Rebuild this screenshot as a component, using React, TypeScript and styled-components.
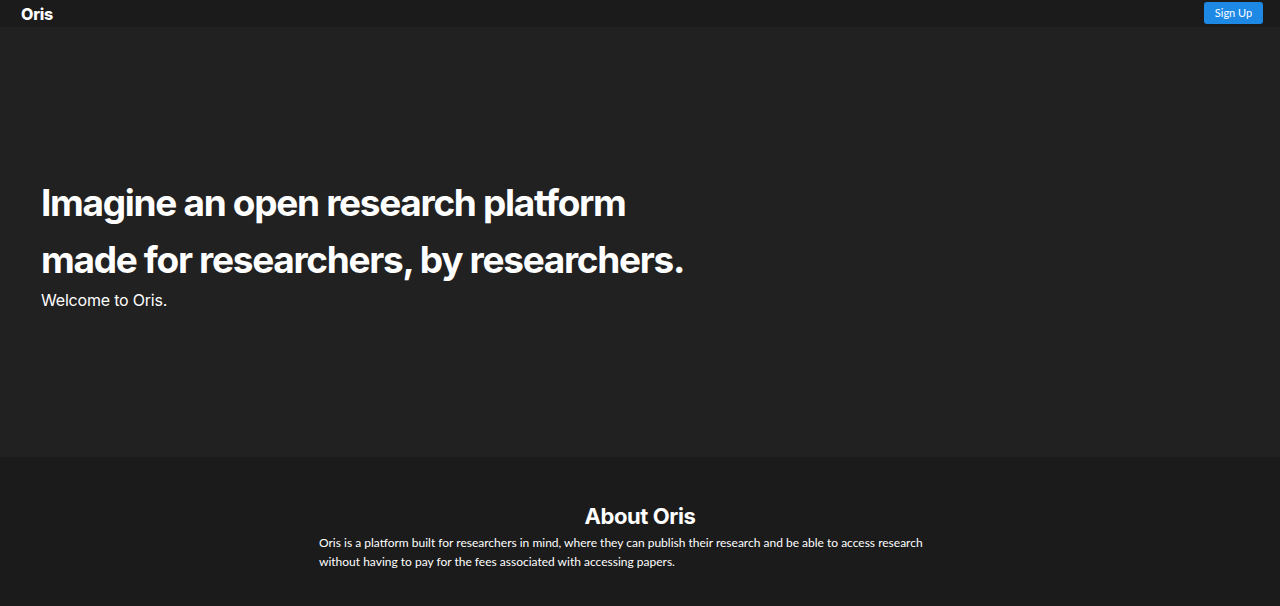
import React from 'react';
import styled, { createGlobalStyle } from 'styled-components';

const GlobalStyle = createGlobalStyle`
  html, body {
    margin: 0;
    padding: 0;
    background: #1b1b1b;
  }
  * {
    box-sizing: border-box;
  }
`;

const headingFont = `Inter, "Noto Sans", sans-serif`;
const bodyFont = `Lato, "Open Sans", sans-serif`;

export default function App() {
  return (
    <>
      <GlobalStyle />
      <Page>
        <NavBar>
          <Logo>Oris</Logo>
          <SignUpButton>Sign Up</SignUpButton>
        </NavBar>
        <Hero>
          <HeroTitle>
            Imagine an open research platform
            <br />
            made for researchers, by researchers.
          </HeroTitle>
          <HeroSubtitle>Welcome to Oris.</HeroSubtitle>
        </Hero>
        <About>
          <AboutInner>
            <AboutTitle>About Oris</AboutTitle>
            <AboutText>
              Oris is a platform built for researchers in mind, where they can
              publish their research and be able to access research without
              having to pay for the fees associated with accessing papers.
            </AboutText>
          </AboutInner>
        </About>
      </Page>
    </>
  );
}

const Page = styled.div`
  width: 100%;
  min-height: 606px;
  background: #1b1b1b;
  color: #ffffff;
`;

const NavBar = styled.nav`
  height: 27px;
  padding: 0 17px 0 21px;
  display: flex;
  align-items: center;
  justify-content: space-between;
  background: #1b1b1b;
`;

const Logo = styled.span`
  font-family: ${headingFont};
  font-weight: 800;
  font-size: 16px;
  letter-spacing: -0.2px;
  color: #ffffff;
`;

const SignUpButton = styled.button`
  height: 22px;
  width: 59px;
  margin-top: -2px;
  border: none;
  border-radius: 3px;
  background: #1e88e5;
  color: #ffffff;
  font-family: ${bodyFont};
  font-size: 11px;
  cursor: pointer;
`;

const Hero = styled.section`
  height: 430px;
  padding: 0 41px;
  display: flex;
  flex-direction: column;
  justify-content: center;
  background: #212121;
`;

const HeroTitle = styled.h1`
  margin: 0;
  font-family: ${headingFont};
  font-weight: 700;
  font-size: 37px;
  line-height: 57px;
  letter-spacing: -1.3px;
  color: #ffffff;
`;

const HeroSubtitle = styled.p`
  margin: 1px 0 0;
  font-family: ${headingFont};
  font-size: 16px;
  line-height: 22px;
  letter-spacing: -0.2px;
  color: #ffffff;
`;

const About = styled.section`
  height: 149px;
  padding-top: 44px;
  background: #1b1b1b;
`;

const AboutInner = styled.div`
  width: 642px;
  margin: 0 auto;
`;

const AboutTitle = styled.h2`
  margin: 0;
  text-align: center;
  font-family: ${headingFont};
  font-weight: 700;
  font-size: 22px;
  line-height: 30px;
  letter-spacing: -0.4px;
  color: #ffffff;
`;

const AboutText = styled.p`
  margin: 2px 0 0;
  font-family: ${bodyFont};
  font-size: 12px;
  line-height: 19px;
  color: #ffffff;
`;
